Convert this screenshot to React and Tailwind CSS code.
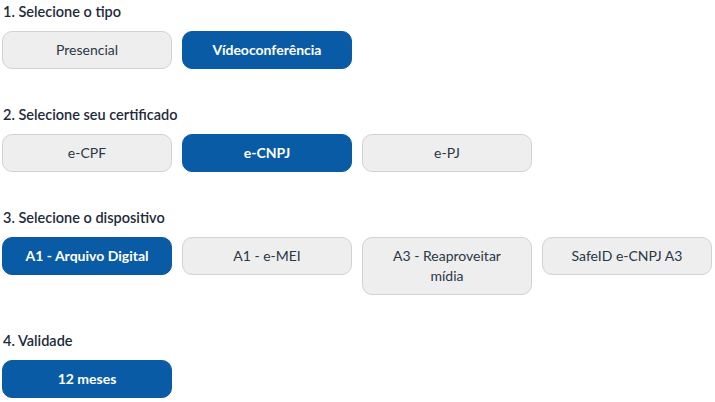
const steps = [
  {
    title: "1. Selecione o tipo",
    options: ["Presencial", "Vídeoconferência"],
    selected: "Vídeoconferência",
  },
  {
    title: "2. Selecione seu certificado",
    options: ["e-CPF", "e-CNPJ", "e-PJ"],
    selected: "e-CNPJ",
  },
  {
    title: "3. Selecione o dispositivo",
    options: ["A1 - Arquivo Digital", "A1 - e-MEI", "A3 - Reaproveitar mídia", "SafeID e-CNPJ A3"],
    selected: "A1 - Arquivo Digital",
  },
  {
    title: "4. Validade",
    options: ["12 meses"],
    selected: "12 meses",
  },
];

function OptionButton({ label, active }) {
  return (
    <button
      className={
        active
          ? "w-[170px] rounded-[10px] border border-[#0a5ba6] bg-[#0a5ba6] px-4 py-[8px] text-center text-sm leading-5 font-bold text-white"
          : "w-[170px] rounded-[10px] border border-[#d2d2d2] bg-[#eeeeee] px-4 py-[8px] text-center text-sm leading-5 text-[#2a3746]"
      }
    >
      {label}
    </button>
  );
}

export default function App() {
  return (
    <div className="min-h-screen bg-white pl-[2px] pt-[2px] font-['Lato',sans-serif]">
      {steps.map((step) => (
        <div key={step.title} className="mb-[36px]">
          <h3 className="pl-px text-[14.5px] leading-5 font-semibold text-[#1e2b3a]">{step.title}</h3>
          <div className="mt-[9px] flex items-start gap-[10px]">
            {step.options.map((opt) => (
              <OptionButton key={opt} label={opt} active={opt === step.selected} />
            ))}
          </div>
        </div>
      ))}
    </div>
  );
}
